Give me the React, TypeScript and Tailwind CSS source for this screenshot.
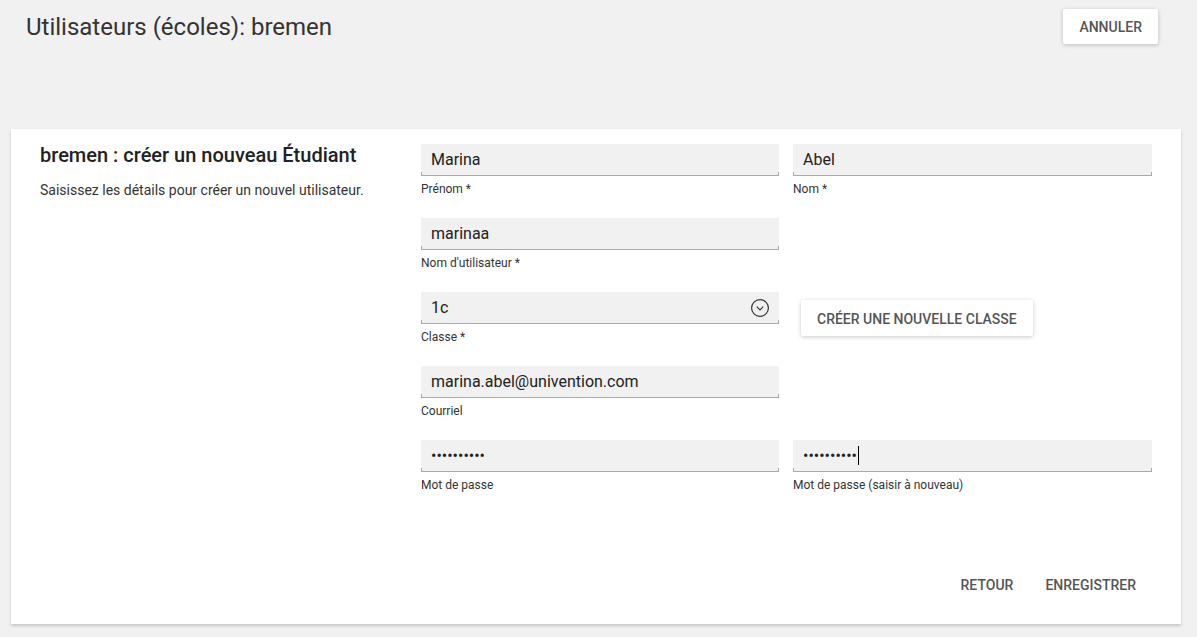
import React from "react";

const font = { fontFamily: "Roboto, 'Noto Sans', sans-serif" };

function Field({
  value,
  label,
  password,
  caret,
  select,
}: {
  value: string;
  label: string;
  password?: boolean;
  caret?: boolean;
  select?: boolean;
}) {
  return (
    <div className="flex flex-col">
      <div className="flex h-[32px] flex-col bg-[#f1f1f1]">
        <div className="flex h-[28px] items-end pl-[10px] pr-[10px]">
          {password ? (
            <div className="flex h-[28px] items-center pt-[3px]">
              <span className="text-[16px] leading-none text-[#222]">••••••••••</span>
              {caret && <span className="ml-[1px] inline-block h-[19px] w-px bg-black" />}
            </div>
          ) : (
            <div className="flex w-full items-center justify-between">
              <span className="text-[16px] leading-[24px] text-[#222]">{value}</span>
              {select && (
                <svg width="20" height="20" viewBox="0 0 20 20" className="mb-[1px] -mr-[1px]">
                  <circle cx="10" cy="10" r="8.4" fill="none" stroke="#333" strokeWidth="1.2" />
                  <path d="M6.8 8.6 L10 11.8 L13.2 8.6" fill="none" stroke="#333" strokeWidth="1.2" />
                </svg>
              )}
            </div>
          )}
        </div>
        <div className="mt-auto h-[4px] border-x border-b border-[#a9a9a9]" />
      </div>
      <div className="mt-[6px] text-[12px] leading-[14px] text-[#333]">{label}</div>
    </div>
  );
}

export default function App() {
  return (
    <div className="min-h-[637px] bg-[#f1f1f1]" style={font}>
      <div className="flex h-[129px] items-start justify-between pl-[26px] pr-[39px]">
        <h1 className="mt-[12px] text-[24px] font-normal leading-[30px] text-[#333]">
          Utilisateurs (écoles): bremen
        </h1>
        <button className="mt-[9px] h-[35px] rounded-[2px] bg-white px-[16px] pt-[1px] text-[14px] font-medium text-[#555] shadow-[0_1px_4px_rgba(0,0,0,0.22)]">
          ANNULER
        </button>
      </div>
      <div className="ml-[11px] mr-[16px] flex flex-col bg-white pb-[21px] pl-[29px] pr-[29px] pt-[15px] shadow-[0_2px_3px_rgba(0,0,0,0.18)]">
        <div className="flex">
          <div className="w-[381px] shrink-0">
            <h2 className="text-[20px] font-medium leading-[22px] text-[#222]">
              bremen : créer un nouveau Étudiant
            </h2>
            <p className="mt-[15px] text-[14px] leading-[18px] text-[#333]">
              Saisissez les détails pour créer un nouvel utilisateur.
            </p>
          </div>
          <div className="grid grid-cols-[358px_359px] gap-x-[14px] gap-y-[22px]">
            <Field value="Marina" label="Prénom *" />
            <Field value="Abel" label="Nom *" />
            <Field value="marinaa" label="Nom d'utilisateur *" />
            <div />
            <Field value="1c" label="Classe *" select />
            <div className="flex items-start pl-[8px] pt-[8px]">
              <button className="h-[36px] rounded-[2px] bg-white px-[16px] pt-[2px] text-[14px] font-medium text-[#555] shadow-[0_1px_4px_rgba(0,0,0,0.22)]">
                CRÉER UNE NOUVELLE CLASSE
              </button>
            </div>
            <Field value="marina.abel@univention.com" label="Courriel" />
            <div />
            <Field value="" label="Mot de passe" password />
            <Field value="" label="Mot de passe (saisir à nouveau)" password caret />
          </div>
        </div>
        <div className="mt-[75px] flex justify-end">
          <button className="h-[36px] px-[16px] text-[14px] font-medium text-[#555]">RETOUR</button>
          <button className="h-[36px] px-[16px] text-[14px] font-medium text-[#555]">ENREGISTRER</button>
        </div>
      </div>
    </div>
  );
}
